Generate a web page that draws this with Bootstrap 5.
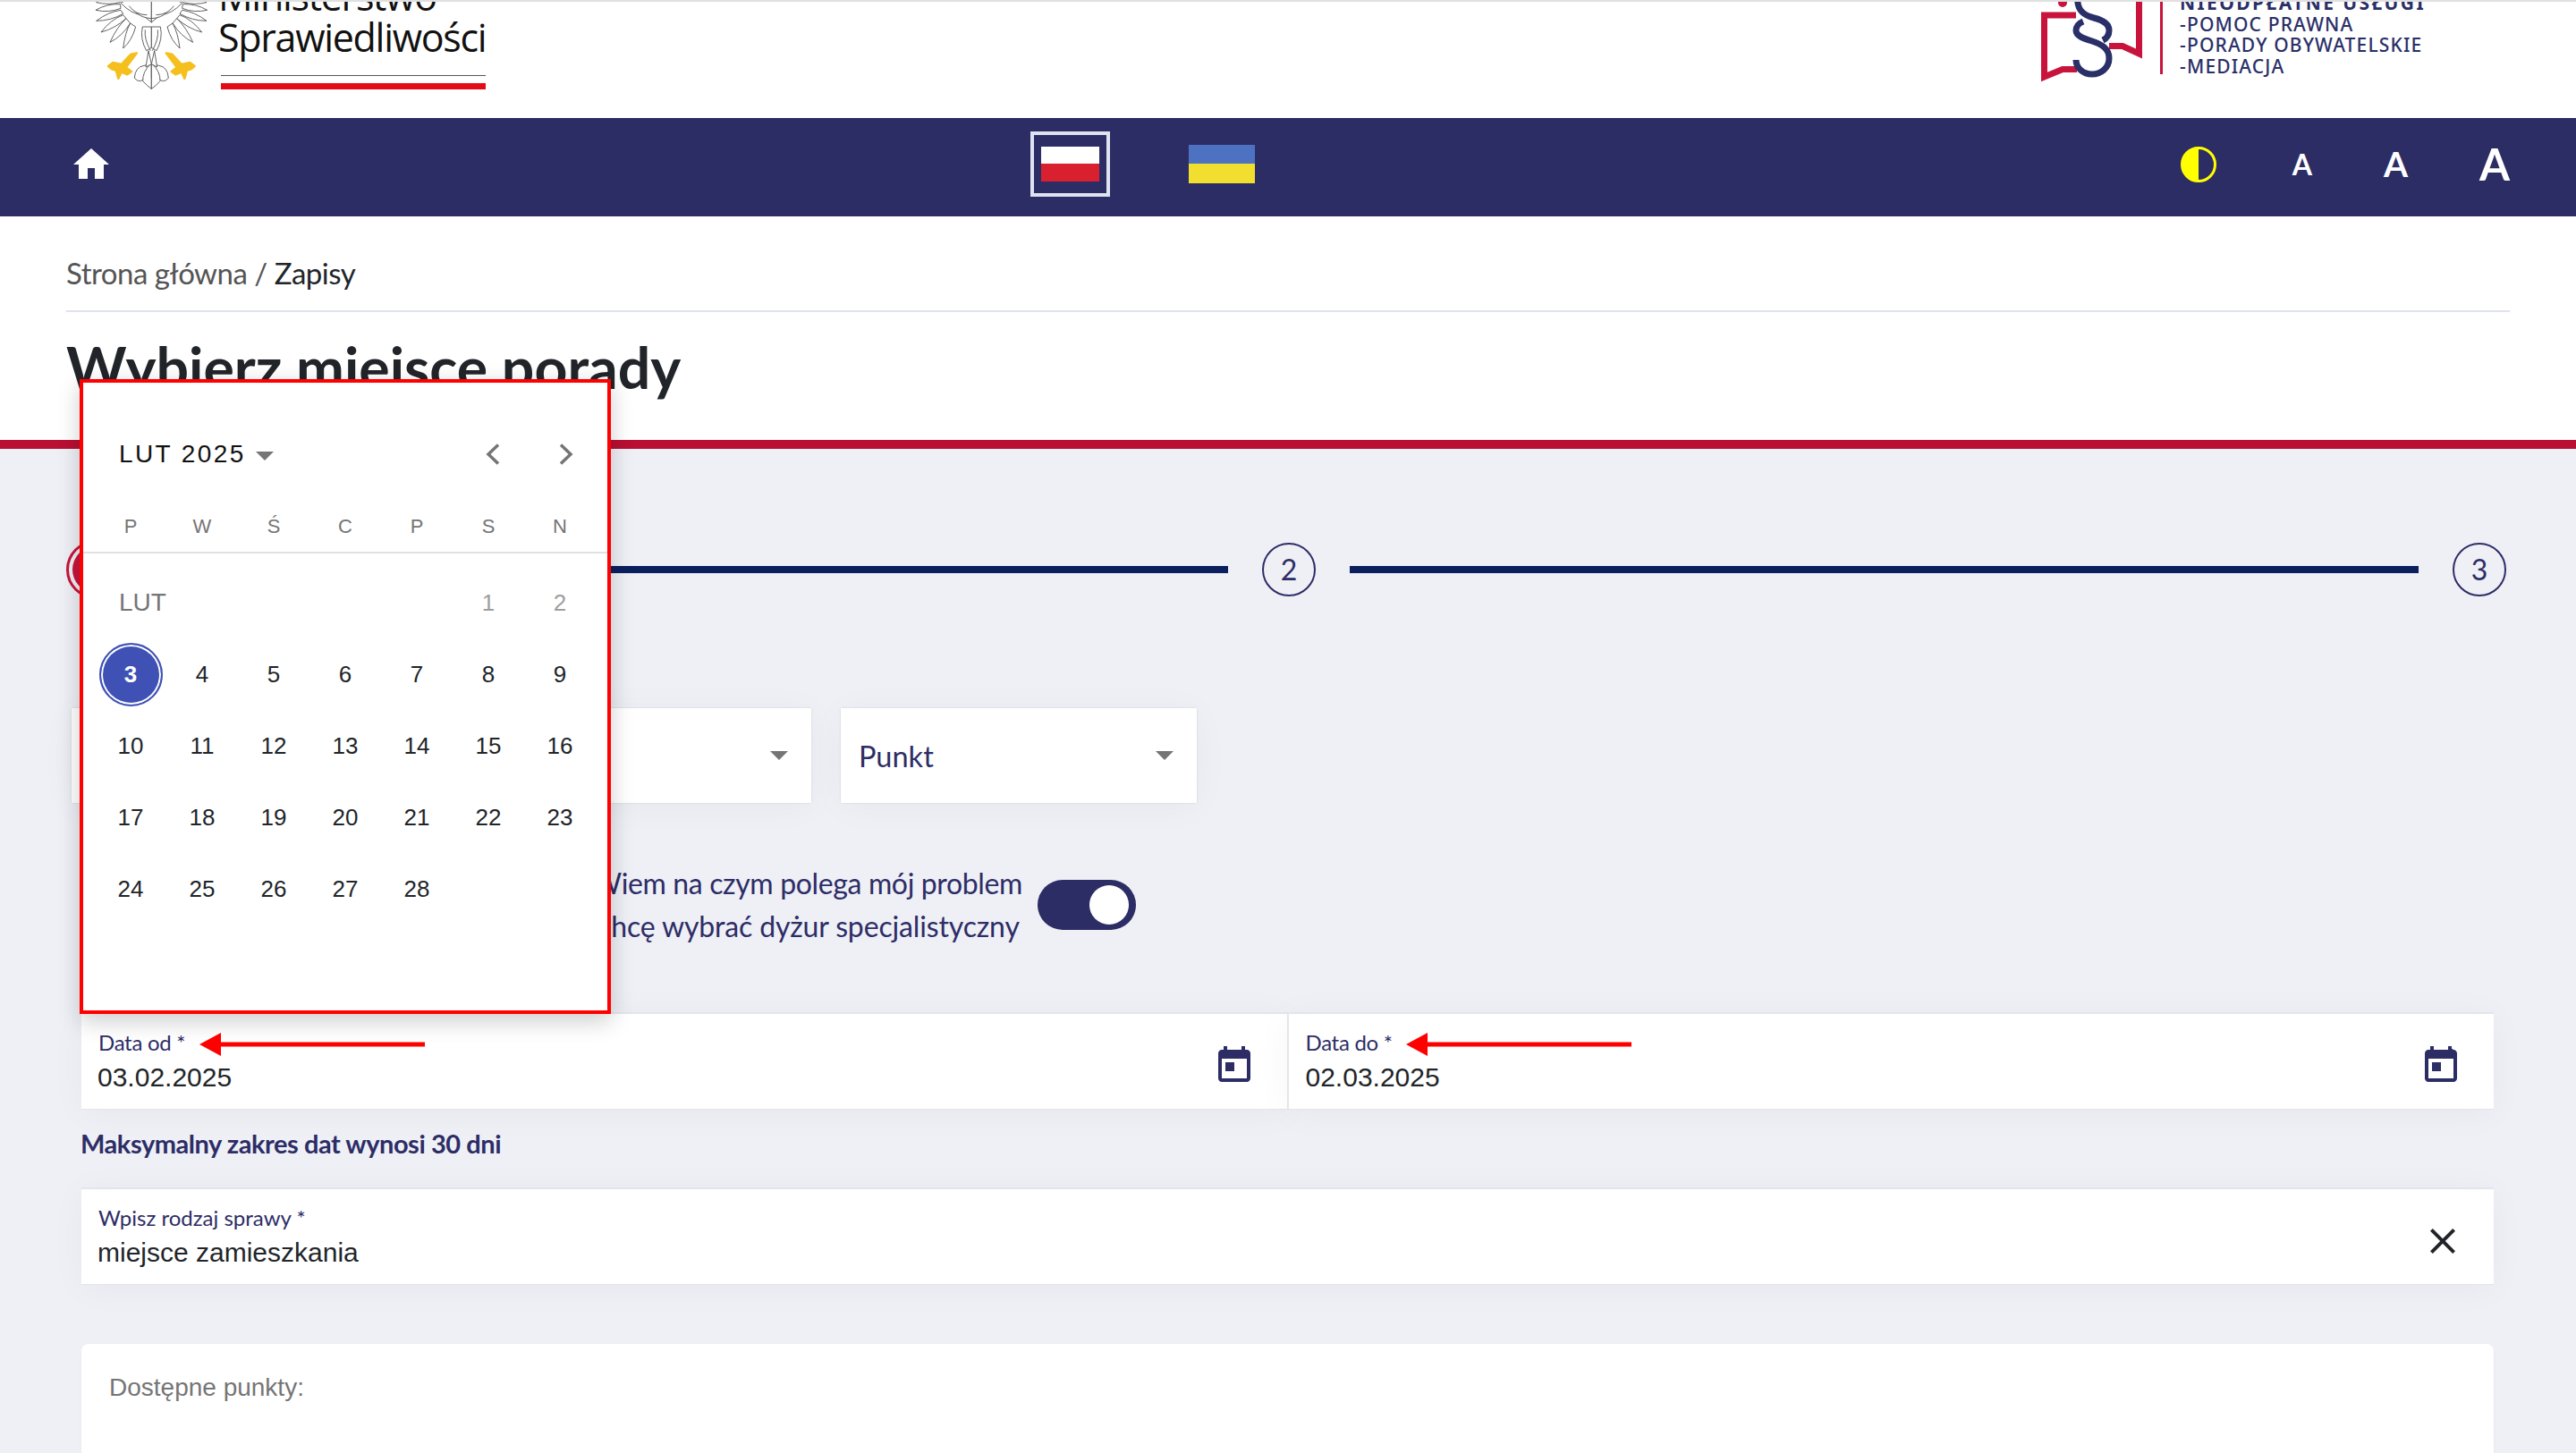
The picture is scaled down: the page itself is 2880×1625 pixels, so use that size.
<!DOCTYPE html>
<html lang="pl">
<head>
  <meta charset="UTF-8">
  <meta name="viewport" content="width=device-width, initial-scale=1">
  <title>Zapisy</title>
  <link href="https://cdn.jsdelivr.net/npm/bootstrap@5.3.3/dist/css/bootstrap.min.css" rel="stylesheet">
  <style>
    html, body { height: 100%; overflow: hidden; }
    body { background: #eff0f6; font-family: "Lato", sans-serif; color: #212529; }
    .page-wrap { position: relative; height: 1625px; overflow: hidden; }

    /* logo strip, scrolled off at the top */
    .logo-strip { height: 132px; background: #fff; border-top: 2px solid #e0e0e0; overflow: hidden; position: relative; }
    .ms-logo { margin-left: 106px; margin-top: -2px; }
    .ms-name { margin-left: 8px; width: 299px; }
    .ms-line { font-family: "Open Sans", sans-serif; font-size: 43px; line-height: 46px; color: #111; white-space: nowrap; letter-spacing: -1.3px; height: 46px; }
    .ms-line-first { margin-top: -29px; }
    .ms-rule-thin { height: 1px; background: #555; margin: 19px 0 0 3px; }
    .ms-rule-red { height: 7px; background: #e30b17; margin: 8px 0 0 3px; }
    .nb-logo { margin-right: 168px; margin-top: -2px; }
    .nb-bar { width: 3px; height: 83px; background: #c8143c; margin: 0 19px 0 0; }
    .nb-text { font-family: "Noto Sans", sans-serif; font-weight: 500; font-size: 21px; line-height: 23.5px; color: #2a2f68; letter-spacing: 1.15px; white-space: nowrap; margin-top: -8px; }
    .nb-head { letter-spacing: 2.4px; font-weight: 700; }

    /* navy bar */
    .top-bar { height: 110px; background: #2d2d66; padding-bottom: 7px; }
    .home-ico { margin-left: 78px; }
    .flag-box { margin-left: 1026px; width: 89px; height: 73px; border: 4px solid #dfe3f0; }
    .flag-pl { width: 65px; height: 39px; background: linear-gradient(#fff 50%, #d9202f 50%); }
    .flag-ua { margin-left: 88px; width: 74px; height: 43px; background: linear-gradient(#4d72c1 50%, #f2de2e 50%); }
    .a11y-tools { margin-left: auto; margin-right: 74px; }
    .contrast-ico { margin-right: 85px; }
    .font-a { color: #fff; font-weight: 700; line-height: 1; }
    .font-a-s { font-size: 32px; margin-right: 80px; }
    .font-a-m { font-size: 39px; margin-right: 80px; }
    .font-a-l { font-size: 49px; }

    /* title */
    .title-zone { height: 260px; background: #fff; border-bottom: 10px solid #b80f33; padding: 0 74px; }
    .crumbs { height: 107px; border-bottom: 2px solid #dfe3f0; font-size: 33px; color: #555; padding-top: 40px; line-height: 46px; letter-spacing: -.5px; }
    .crumbs b { font-weight: 400; color: #212529; }
    .page-title { font-size: 64.4px; font-weight: 700; line-height: 76px; margin: 23px 0 0; color: #212529; }

    /* stepper */
    .stepper { margin: 102px 0 0 74px; width: 2728px; gap: 38px; height: 66px; }
    .step-now { width: 66px; height: 66px; border-radius: 50%; border: 3px solid #c8143c; padding: 4px; flex: none; }
    .step-now span { display: block; width: 100%; height: 100%; border-radius: 50%; background: #c8143c; }
    .step-num { width: 60px; height: 60px; border-radius: 50%; border: 2px solid #2d2d66; font-size: 32px; color: #2d2d66; flex: none; }
    .step-line { height: 8px; background: #0a1f5c; flex: 1 1 0; }

    /* fields */
    .picker-row { margin: 122px 0 0 80px; gap: 33px; }
    .pick-box { width: 397px; height: 106px; background: #fff; padding: 0 20px; font-size: 32.5px; color: #2d2d66; box-shadow: 0 0 2px rgba(0,0,0,.12), 0 4px 40px rgba(0,0,0,.04); }
    .pick-box:last-child { width: 398px; }
    .pick-box > span:first-child:not(.tri) { margin-top: 3px; }
    .tri { width: 0; height: 0; border-left: 10px solid transparent; border-right: 10px solid transparent; border-top: 10px solid #757575; margin-left: auto; margin-right: 6px; }
    .switch-row { margin: 66px 0 0 662px; height: 96px; gap: 17px; }
    .switch-text { font-size: 32px; line-height: 48px; color: #2d2d66; width: 481px; white-space: nowrap; letter-spacing: -.36px; }
    .switch-text div + div { letter-spacing: -.15px; }
    .switch-track { width: 110px; height: 56px; border-radius: 28px; background: #2d2d66; position: relative; }
    .switch-track::after { content: ""; position: absolute; right: 8px; top: 6px; width: 44px; height: 44px; border-radius: 50%; background: #fff; }
    .form-block { margin: 72px 92px 0 91px; }
    .in-field { position: relative; background: #fff; height: 109px; border-top: 2px solid #e4e5ea; border-bottom: 1px solid #e4e5ea; box-shadow: 0 4px 40px rgba(0,0,0,.04); padding: 12px 19px 0; flex: 1 1 0; }
    .in-field + .in-field { border-left: 2px solid #e4e5ea; }
    .in-field + .in-field .in-value { margin-left: 0; }
    .in-label { font-size: 24px; line-height: 40px; color: #2d2d66; letter-spacing: -.3px; }
    .in-label-wide { letter-spacing: 0; }
    .in-value { font-family: "Liberation Sans", sans-serif; font-size: 30px; line-height: 40px; margin-top: -1px; margin-left: -1px; color: #212529; }
    .in-ico { position: absolute; right: 35px; top: 34px; }
    .in-ico-close { right: 33px; }
    .red-arrow { position: absolute; top: 21px; width: 252px; height: 26px; }
    .limit-note { font-size: 29px; font-weight: 700; color: #2d2d66; line-height: 40px; margin: 18px 0 29px -1px; letter-spacing: -.45px; }
    .spots-card { margin-top: 66px; min-height: 300px; border: 0; border-radius: 8px; box-shadow: 0 2px 4px rgba(0,0,0,.03); }
    .spots-title { font-family: "Liberation Sans", sans-serif; font-size: 28px; color: #757575; line-height: 40px; padding: 29px 31px; }

    /* date picker on top of the form */
    .date-pop { position: absolute; left: 89px; top: 424px; width: 594px; height: 710px; background: #fff; border: 4px solid #f00; font-family: "Liberation Sans", sans-serif; box-shadow: 0 8px 24px rgba(0,0,0,.2); z-index: 5; }
    .pop-head { height: 144px; padding: 16px 0 0 40px; }
    .pop-month { font-size: 28px; letter-spacing: 2.4px; color: #111; line-height: 1; }
    .pop-month-tri { margin: 4px 0 0 11px; }
    .pop-nav { margin-left: auto; gap: 66px; margin-right: 38px; }
    .day-grid { display: grid; grid-template-columns: repeat(7, 80px); padding-left: 13px; }
    .week-head { height: 30px; font-size: 22px; color: #757575; }
    .pop-rule { height: 2px; background: #e0e0e0; margin: 15px 0; }
    .day-cell { height: 80px; font-size: 26px; color: #212529; }
    .day-off { color: #9e9e9e; }
    .month-mark { grid-column: span 5; font-size: 28px; color: #757575; height: 80px; padding-left: 27px; }
    .day-now { width: 71px; height: 71px; border-radius: 50%; background: #3f51b5; border: 2px solid #3f51b5; box-shadow: inset 0 0 0 2px #fff; color: #fff; font-weight: 700; }
  </style>
</head>
<body>
<div class="page-wrap">

  <!-- logos -->
  <div class="logo-strip d-flex justify-content-between align-items-start">
    <div class="d-flex align-items-start">
      <svg class="ms-logo" width="130" height="110" viewBox="45 0 390 330">
        <defs>
          <g id="eagleHalf" fill="#fff" stroke="#444" stroke-width="2.5">
            <path d="M130 -8Q85 -14 50 8Q90 18 130 8Z"/>
            <path d="M130 14Q85 12 48 34Q92 44 132 28Z"/>
            <path d="M132 34Q90 40 50 70Q98 70 140 46Z"/>
            <path d="M140 50Q98 66 66 108Q112 96 150 62Z"/>
            <path d="M150 62Q118 92 96 142Q136 122 164 78Z"/>
            <path d="M164 78Q146 110 140 162Q170 136 182 90Z"/>
            <path d="M132 10Q168 48 205 50L235 75L235 -5L160 -5Z"/>
            <path d="M182 40Q200 60 235 62"/>
            <path d="M160 20Q182 50 220 50"/>
            <path d="M205 90Q196 130 218 170L235 160L235 90Z"/>
            <path d="M214 100Q210 130 232 170"/>
            <path d="M210 220Q180 225 178 262Q196 282 212 262Q222 250 235 262L235 215Z"/>
            <path d="M232 215Q205 240 206 272Q222 290 235 298L235 215Z"/>
            <path d="M225 170L235 215L216 225Z"/>
          </g>
          <g id="eagleClaw" fill="#f5bf1d" stroke="#f5bf1d" stroke-width="7" stroke-linejoin="round">
            <path d="M186 178L166 182L134 216L106 210L90 222L102 232L116 236L124 264L134 242L154 250L168 240L150 226Z"/>
          </g>
        </defs>
        <use href="#eagleHalf"/>
        <use href="#eagleHalf" transform="matrix(-1 0 0 1 470 0)"/>
        <use href="#eagleClaw"/>
        <use href="#eagleClaw" transform="matrix(-1 0 0 1 470 0)"/>
      </svg>
      <div class="ms-name">
        <div class="ms-line ms-line-first">Ministerstwo</div>
        <div class="ms-line">Sprawiedliwości</div>
        <div class="ms-rule-thin"></div>
        <div class="ms-rule-red"></div>
      </div>
    </div>
    <div class="nb-logo d-flex align-items-start">
      <svg width="133" height="94" viewBox="2281 0 133 94" fill="none">
        <path d="M2320 17H2284.5V86L2305 77.5H2321" stroke="#c8143c" stroke-width="7"/>
        <circle cx="2305" cy="3" r="5" fill="#c8143c"/>
        <path d="M2390.5 0V60L2372 51.5H2357" stroke="#c8143c" stroke-width="7"/>
        <g transform="translate(2260 0)" stroke="#2a2f68" stroke-width="7">
          <path d="M61.7 0C62 14 72 18 80 20C92 23 97 28 97 34C97 39 94 43 90 45"/>
          <path d="M68 24C63 26 60 30 60 34C60 40 68 43 78 46C90 50 97 55 97 65C97 76 88 83 78 83C68 83 60 76 60 67"/>
        </g>
      </svg>
      <div class="nb-bar"></div>
      <div class="nb-text">
        <div class="nb-head">NIEODPŁATNE USŁUGI</div>
        <div>-POMOC PRAWNA</div>
        <div>-PORADY OBYWATELSKIE</div>
        <div>-MEDIACJA</div>
      </div>
    </div>
  </div>

  <!-- navy bar -->
  <nav class="top-bar d-flex align-items-center">
    <svg class="home-ico" width="48" height="48" viewBox="0 0 24 24" fill="#fff"><path d="M10 20v-6h4v6h5v-8h3L12 3 2 12h3v8z"/></svg>
    <div class="flag-box d-flex align-items-center justify-content-center"><div class="flag-pl"></div></div>
    <div class="flag-ua"></div>
    <div class="a11y-tools d-flex align-items-center">
      <svg class="contrast-ico" width="40" height="40" viewBox="0 0 40 40"><circle cx="20" cy="20" r="18.5" fill="none" stroke="#ff0" stroke-width="3"/><path d="M20 1.5A18.5 18.5 0 0 0 20 38.5Z" fill="#ff0"/></svg>
      <span class="font-a font-a-s">A</span>
      <span class="font-a font-a-m">A</span>
      <span class="font-a font-a-l">A</span>
    </div>
  </nav>

  <!-- title -->
  <section class="title-zone">
    <div class="crumbs">Strona główna / <b>Zapisy</b></div>
    <h1 class="page-title">Wybierz miejsce porady</h1>
  </section>

  <!-- stepper -->
  <div class="stepper d-flex align-items-center">
    <div class="step-now"><span></span></div>
    <div class="step-line"></div>
    <div class="step-num d-flex align-items-center justify-content-center">2</div>
    <div class="step-line"></div>
    <div class="step-num d-flex align-items-center justify-content-center">3</div>
  </div>

  <!-- pickers -->
  <div class="picker-row d-flex">
    <div class="pick-box d-flex align-items-center"><span class="tri"></span></div>
    <div class="pick-box d-flex align-items-center"><span class="tri"></span></div>
    <div class="pick-box d-flex align-items-center"><span>Punkt</span><span class="tri"></span></div>
  </div>

  <div class="switch-row d-flex align-items-center">
    <div class="switch-text"><div>Wiem na czym polega mój problem</div><div>Chcę wybrać dyżur specjalistyczny</div></div>
    <div class="switch-track"></div>
  </div>

  <div class="form-block">
    <div class="d-flex">
      <div class="in-field">
        <svg class="red-arrow" style="left:132px" viewBox="0 0 252 26"><path d="M0 13L24 0V10.5H252V15.5H24V26Z" fill="#f00"/></svg>
        <div class="in-label">Data od *</div>
        <div class="in-value">03.02.2025</div>
        <svg class="in-ico" width="48" height="48" viewBox="0 0 24 24" fill="#2d2d66"><path d="M19 3h-1V1h-2v2H8V1H6v2H5c-1.110 0-1.990.9-1.990 2L3 19c0 1.100.89 2 2 2h14c1.100 0 2-.9 2-2V5c0-1.100-.9-2-2-2zm0 16H5V8h14v11zM7 10h5v5H7z"/></svg>
      </div>
      <div class="in-field">
        <svg class="red-arrow" style="left:131px" viewBox="0 0 252 26"><path d="M0 13L24 0V10.5H252V15.5H24V26Z" fill="#f00"/></svg>
        <div class="in-label">Data do *</div>
        <div class="in-value">02.03.2025</div>
        <svg class="in-ico" width="48" height="48" viewBox="0 0 24 24" fill="#2d2d66"><path d="M19 3h-1V1h-2v2H8V1H6v2H5c-1.110 0-1.990.9-1.990 2L3 19c0 1.100.89 2 2 2h14c1.100 0 2-.9 2-2V5c0-1.100-.9-2-2-2h-1V1h-2zm0 16H5V8h14v11zM7 10h5v5H7z"/></svg>
      </div>
    </div>
    <div class="limit-note">Maksymalny zakres dat wynosi 30 dni</div>
    <div class="in-field">
      <div class="in-label in-label-wide">Wpisz rodzaj sprawy *</div>
      <div class="in-value">miejsce zamieszkania</div>
      <svg class="in-ico in-ico-close" width="48" height="48" viewBox="0 0 24 24" fill="#212529"><path d="M19 6.41L17.59 5 12 10.59 6.41 5 5 6.41 10.59 12 5 17.59 6.41 19 12 13.41 17.59 19 19 17.59 13.41 12z"/></svg>
    </div>
    <div class="card spots-card">
      <div class="spots-title">Dostępne punkty:</div>
    </div>
  </div>

  <!-- date picker -->
  <div class="date-pop">
    <div class="pop-head d-flex align-items-center">
      <span class="pop-month">LUT 2025</span>
      <span class="tri pop-month-tri"></span>
      <div class="pop-nav d-flex">
        <svg width="16" height="24" viewBox="0 0 16 24" fill="none" stroke="#757575" stroke-width="3.5"><path d="M14 1.5L3 12L14 22.5"/></svg>
        <svg width="16" height="24" viewBox="0 0 16 24" fill="none" stroke="#757575" stroke-width="3.5"><path d="M2 1.5L13 12L2 22.5"/></svg>
      </div>
    </div>
    <div class="day-grid week-head text-center">
      <span>P</span><span>W</span><span>Ś</span><span>C</span><span>P</span><span>S</span><span>N</span>
    </div>
    <div class="pop-rule"></div>
    <div class="day-grid">
      <div class="month-mark d-flex align-items-center">LUT</div>
      <div class="day-cell day-off d-flex align-items-center justify-content-center">1</div>
      <div class="day-cell day-off d-flex align-items-center justify-content-center">2</div>
      <div class="day-cell d-flex align-items-center justify-content-center"><span class="day-now d-flex align-items-center justify-content-center">3</span></div>
      <div class="day-cell d-flex align-items-center justify-content-center">4</div>
      <div class="day-cell d-flex align-items-center justify-content-center">5</div>
      <div class="day-cell d-flex align-items-center justify-content-center">6</div>
      <div class="day-cell d-flex align-items-center justify-content-center">7</div>
      <div class="day-cell d-flex align-items-center justify-content-center">8</div>
      <div class="day-cell d-flex align-items-center justify-content-center">9</div>
      <div class="day-cell d-flex align-items-center justify-content-center">10</div>
      <div class="day-cell d-flex align-items-center justify-content-center">11</div>
      <div class="day-cell d-flex align-items-center justify-content-center">12</div>
      <div class="day-cell d-flex align-items-center justify-content-center">13</div>
      <div class="day-cell d-flex align-items-center justify-content-center">14</div>
      <div class="day-cell d-flex align-items-center justify-content-center">15</div>
      <div class="day-cell d-flex align-items-center justify-content-center">16</div>
      <div class="day-cell d-flex align-items-center justify-content-center">17</div>
      <div class="day-cell d-flex align-items-center justify-content-center">18</div>
      <div class="day-cell d-flex align-items-center justify-content-center">19</div>
      <div class="day-cell d-flex align-items-center justify-content-center">20</div>
      <div class="day-cell d-flex align-items-center justify-content-center">21</div>
      <div class="day-cell d-flex align-items-center justify-content-center">22</div>
      <div class="day-cell d-flex align-items-center justify-content-center">23</div>
      <div class="day-cell d-flex align-items-center justify-content-center">24</div>
      <div class="day-cell d-flex align-items-center justify-content-center">25</div>
      <div class="day-cell d-flex align-items-center justify-content-center">26</div>
      <div class="day-cell d-flex align-items-center justify-content-center">27</div>
      <div class="day-cell d-flex align-items-center justify-content-center">28</div>
    </div>
  </div>

</div>
<script src="https://cdn.jsdelivr.net/npm/bootstrap@5.3.3/dist/js/bootstrap.bundle.min.js"></script>
</body>
</html>
